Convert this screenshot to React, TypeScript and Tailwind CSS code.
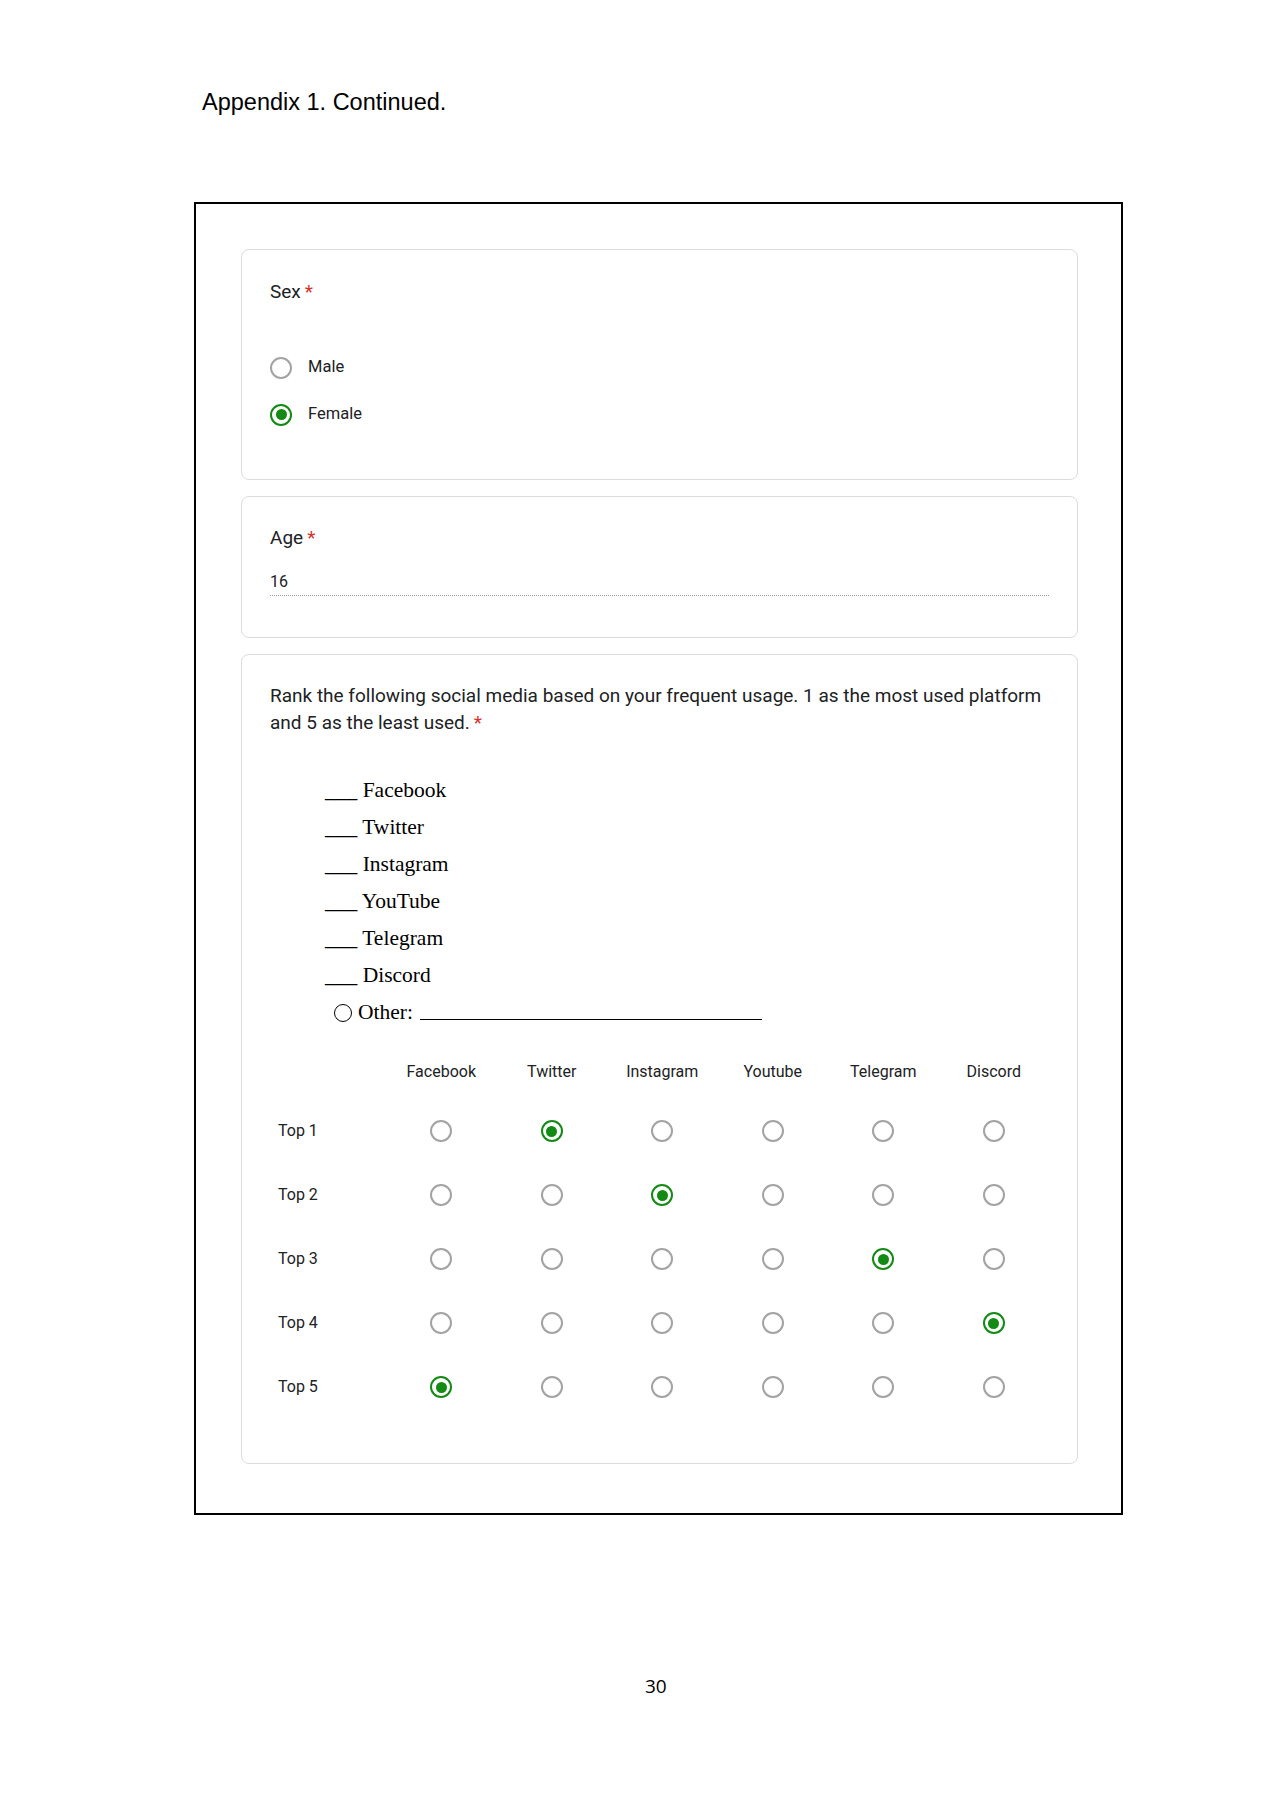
import React from "react";

const Radio = ({ on, size = 22 }: { on?: boolean; size?: number }) => (
  <div
    className={
      "flex items-center justify-center rounded-full border-2 " +
      (on ? "border-[#138a13]" : "border-[#a3a3a3]")
    }
    style={{ width: size, height: size }}
  >
    {on ? <div className="w-[11px] h-[11px] rounded-full bg-[#138a13]" /> : null}
  </div>
);

const Star = () => <span className="text-[#d93025] ml-[4px]">*</span>;

const cols = ["Facebook", "Twitter", "Instagram", "Youtube", "Telegram", "Discord"];
const selected = [1, 2, 4, 5, 0];
const items = ["Facebook", "Twitter", "Instagram", "YouTube", "Telegram", "Discord"];

export default function App() {
  return (
    <div className="w-[1272px] h-[1800px] bg-white text-[#202124] font-['Roboto',sans-serif]">
      <div className="pt-[88px] pl-[202px] text-[23.5px] leading-[28px] text-black font-['Liberation_Sans',Arial,sans-serif]">
        Appendix 1. Continued.
      </div>
      <div className="mt-[86px] ml-[194px] w-[929px] h-[1313px] border-2 border-black pt-[45px] pl-[45px]">
        <div className="flex flex-col gap-[16px] w-[837px]">
          {/* Sex */}
          <div className="h-[231px] rounded-[8px] border border-[#dadce0] px-[28px] pt-[30px]">
            <div className="text-[19px] leading-[24px]">
              Sex<Star />
            </div>
            <div className="mt-[40px] flex flex-col">
              <div className="h-[47px] flex items-center gap-[16px]">
                <Radio />
                <span className="text-[16.5px]">Male</span>
              </div>
              <div className="h-[47px] flex items-center gap-[16px]">
                <Radio on />
                <span className="text-[16.5px]">Female</span>
              </div>
            </div>
          </div>
          {/* Age */}
          <div className="h-[142px] rounded-[8px] border border-[#dadce0] px-[28px] pt-[29px]">
            <div className="text-[19px] leading-[24px]">
              Age<Star />
            </div>
            <div className="mt-[22px] text-[16px] leading-[20px] pb-[3px] border-b border-dotted border-[#9e9e9e]">
              16
            </div>
          </div>
          {/* Rank */}
          <div className="h-[810px] rounded-[8px] border border-[#dadce0] px-[28px] pt-[27px]">
            <div className="text-[19px] leading-[27px]">
              <div className="whitespace-nowrap">
                Rank the following social media based on your frequent usage. 1 as the most used platform
              </div>
              <div>
                and 5 as the least used.<Star />
              </div>
            </div>
            <div className="mt-[36px] pl-[55px] font-['Liberation_Serif','Times_New_Roman',serif] text-[21.5px] text-black">
              {items.map((it) => (
                <div key={it} className="h-[37px] leading-[37px] whitespace-pre">
                  {"___ " + it}
                </div>
              ))}
              <div className="h-[37px] flex items-center pl-[9px]">
                <div className="w-[18px] h-[18px] rounded-full border-[1.5px] border-black" />
                <span className="ml-[6px]">Other:</span>
                <span className="ml-[7px] mt-[14px] w-[342px] border-b-[1.5px] border-black" />
              </div>
            </div>
            <div className="mt-[31px] grid grid-cols-[116px_repeat(6,1fr)] text-[16px]">
              <div className="h-[20px]" />
              {cols.map((c) => (
                <div key={c} className="h-[20px] leading-[20px] text-center">
                  {c}
                </div>
              ))}
              <div className="col-span-7 h-[17px]" />
              {selected.map((s, r) => (
                <React.Fragment key={r}>
                  <div className="h-[64px] flex items-center pl-[8px]">Top {r + 1}</div>
                  {cols.map((c, i) => (
                    <div key={c} className="h-[64px] flex items-center justify-center">
                      <Radio on={i === s} size={22} />
                    </div>
                  ))}
                </React.Fragment>
              ))}
            </div>
          </div>
        </div>
      </div>
      <div className="mt-[158px] ml-[645px] text-[19px] leading-[26px] text-black font-['Open_Sans',sans-serif]">
        30
      </div>
    </div>
  );
}
